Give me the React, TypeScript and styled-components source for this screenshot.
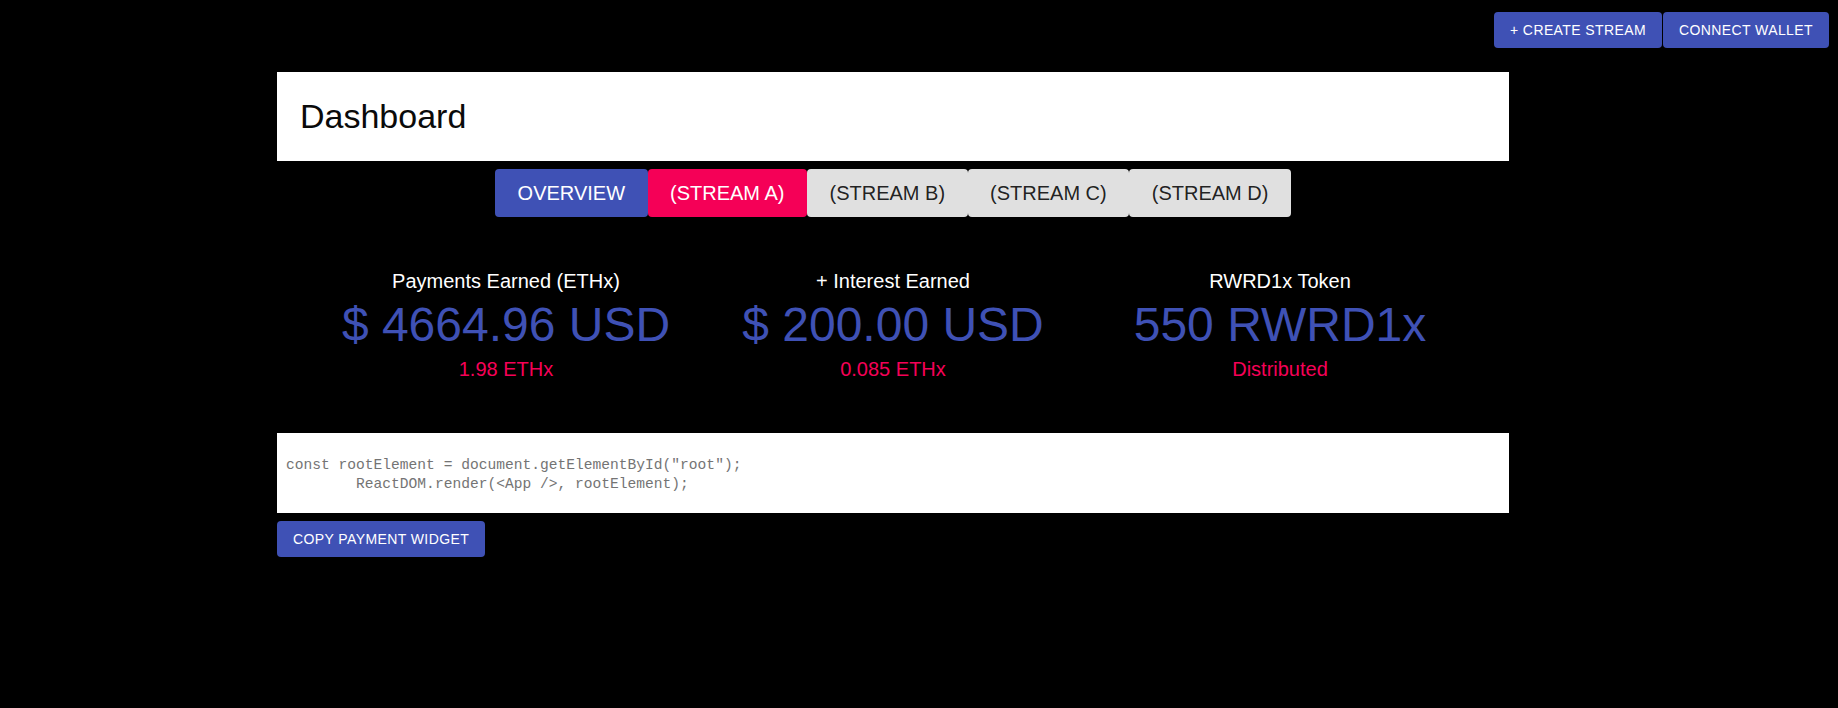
import React from "react";
import styled, { createGlobalStyle } from "styled-components";

const GlobalStyle = createGlobalStyle`
  html, body {
    margin: 0;
    padding: 0;
    background: #000;
    min-height: 100%;
  }
  body {
    font-family: "Liberation Sans", Arial, Helvetica, sans-serif;
    -webkit-font-smoothing: antialiased;
  }
  * { box-sizing: border-box; }
`;

const Page = styled.div`
  min-height: 708px;
  background: #000;
`;

const TopBar = styled.header`
  display: flex;
  justify-content: flex-end;
  padding: 12px 9px 0;
`;

const ActionButton = styled.button`
  height: 36px;
  padding: 0 16px;
  border: 0;
  border-radius: 4px;
  background: #3f51b5;
  color: #fff;
  font-family: "Liberation Sans", Arial, sans-serif;
  font-size: 14px;
  font-weight: 400;
  letter-spacing: 0.4px;
  line-height: 36px;
  text-transform: uppercase;
  white-space: nowrap;
  cursor: pointer;
  & + & {
    margin-left: 1px;
  }
`;

const Frame = styled.main`
  padding-right: 52px;
  margin-top: 24px;
`;

const Container = styled.div`
  max-width: 1280px;
  margin: 0 auto;
  padding: 0 24px;
`;

const HeaderCard = styled.section`
  background: #fff;
  padding: 23px 23px 24px;
`;

const Title = styled.h1`
  margin: 0;
  font-size: 34px;
  line-height: 42px;
  font-weight: 400;
  color: #0a0a0a;
`;

const TabRow = styled.nav`
  display: flex;
  justify-content: center;
  margin-top: 8px;
`;

type TabVariant = "primary" | "secondary" | "default";

const tabColors: Record<TabVariant, { bg: string; fg: string }> = {
  primary: { bg: "#3f51b5", fg: "#fff" },
  secondary: { bg: "#f50057", fg: "#fff" },
  default: { bg: "#e0e0e0", fg: "rgba(0, 0, 0, 0.87)" },
};

const Tab = styled.button<{ $variant: TabVariant }>`
  height: 48px;
  padding: 0 22.5px;
  border: 0;
  border-radius: 4px;
  background: ${(p) => tabColors[p.$variant].bg};
  color: ${(p) => tabColors[p.$variant].fg};
  font-family: "Liberation Sans", Arial, sans-serif;
  font-size: 20px;
  font-weight: 400;
  line-height: 48px;
  text-transform: uppercase;
  white-space: nowrap;
  cursor: pointer;
`;

const Stats = styled.section`
  display: grid;
  grid-template-columns: repeat(3, 387px);
  justify-content: center;
  margin-top: 49px;
`;

const Stat = styled.div`
  text-align: center;
`;

const StatLabel = styled.div`
  font-size: 20px;
  line-height: 30px;
  color: #fff;
`;

const StatValue = styled.div`
  font-size: 48px;
  line-height: 58px;
  color: #3f51b5;
  white-space: nowrap;
`;

const StatSub = styled.div`
  font-size: 20px;
  line-height: 30px;
  color: #f50057;
`;

const CodeCard = styled.section`
  background: #fff;
  margin-top: 49px;
`;

const Code = styled.pre`
  margin: 0;
  padding: 23px 9px 18px;
  font-family: "Liberation Mono", "DejaVu Sans Mono", monospace;
  font-size: 14.6px;
  line-height: 19.4px;
  color: #747474;
  white-space: pre;
`;

const CopyRow = styled.div`
  margin-top: 8px;
`;

const stats = [
  { label: "Payments Earned (ETHx)", value: "$ 4664.96 USD", sub: "1.98 ETHx" },
  { label: "+ Interest Earned", value: "$ 200.00 USD", sub: "0.085 ETHx" },
  { label: "RWRD1x Token", value: "550 RWRD1x", sub: "Distributed" },
];

const tabs: { label: string; variant: TabVariant }[] = [
  { label: "Overview", variant: "primary" },
  { label: "(Stream A)", variant: "secondary" },
  { label: "(Stream B)", variant: "default" },
  { label: "(Stream C)", variant: "default" },
  { label: "(Stream D)", variant: "default" },
];

const codeText = `const rootElement = document.getElementById("root");
        ReactDOM.render(<App />, rootElement);`;

export default function App() {
  return (
    <Page>
      <GlobalStyle />
      <TopBar>
        <ActionButton>+ Create Stream</ActionButton>
        <ActionButton>Connect Wallet</ActionButton>
      </TopBar>
      <Frame>
        <Container>
          <HeaderCard>
            <Title>Dashboard</Title>
          </HeaderCard>
          <TabRow>
            {tabs.map((t) => (
              <Tab key={t.label} $variant={t.variant}>
                {t.label}
              </Tab>
            ))}
          </TabRow>
          <Stats>
            {stats.map((s) => (
              <Stat key={s.label}>
                <StatLabel>{s.label}</StatLabel>
                <StatValue>{s.value}</StatValue>
                <StatSub>{s.sub}</StatSub>
              </Stat>
            ))}
          </Stats>
          <CodeCard>
            <Code>{codeText}</Code>
          </CodeCard>
          <CopyRow>
            <ActionButton>Copy Payment Widget</ActionButton>
          </CopyRow>
        </Container>
      </Frame>
    </Page>
  );
}
